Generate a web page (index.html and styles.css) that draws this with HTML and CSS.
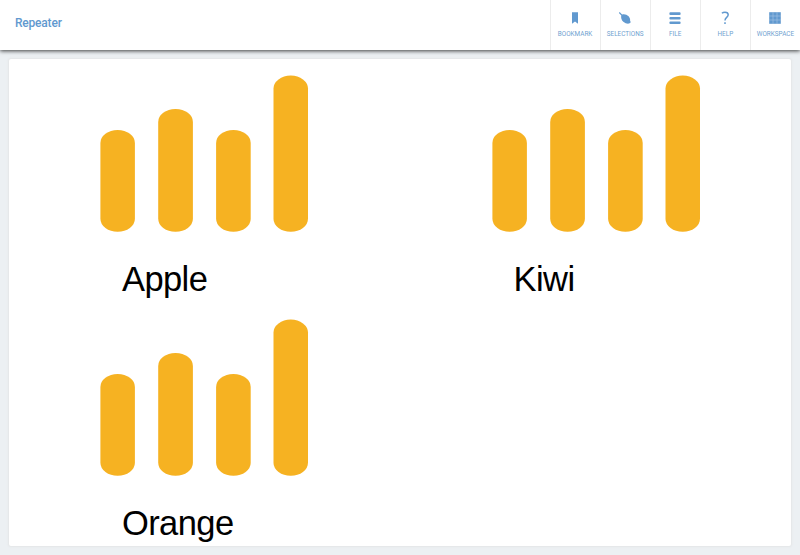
FILE: index.html
```html
<!DOCTYPE html>
<html>
<head>
  <meta charset="utf-8">
  <title>Repeater</title>
  <link rel="stylesheet" href="styles.css">
</head>
<body>
  <header class="topbar">
    <h1 class="title">Repeater</h1>
    <nav class="menu">
      <a class="menu-item">
        <svg class="icon" viewBox="0 0 14 14"><path d="M4 1.200h6v11.600L7 10.400l-3 2.400z"/></svg>
        <span>BOOKMARK</span>
      </a>
      <a class="menu-item">
        <svg class="icon" viewBox="0 0 14 14"><path d="M1.700.9l2.400 2.500C6.300 2.700 8.800 3.400 10.600 5.300c1.300 1.500 1.700 3.200 1.500 4.500l.7 1.500-1.600 1.300c-1.700.4-4-.1-5.900-1.800C3.500 9 2.700 6.300 3.300 4.400L.9 1.900z"/></svg>
        <span>SELECTIONS</span>
      </a>
      <a class="menu-item">
        <svg class="icon" viewBox="0 0 14 14"><rect x="1.400" y="1.300" width="11.200" height="2.600" rx="1"/><rect x="1.400" y="5.900" width="11.200" height="2.600" rx="1"/><rect x="1.400" y="10.500" width="11.200" height="2.600" rx="1"/></svg>
        <span>FILE</span>
      </a>
      <a class="menu-item">
        <svg class="icon icon-line" viewBox="0 0 14 14"><path d="M3.900 2.200C4.700 1.500 5.900 1.200 7 1.200c1.800 0 3.200.9 3.200 2.600C10.200 6.400 7 6.400 7 9.400M7 11.200v1.900"/></svg>
        <span>HELP</span>
      </a>
      <a class="menu-item">
        <svg class="icon" viewBox="0 0 14 14"><path d="M1.200 1.200h11.600v11.600H1.200z"/><path class="grid-lines" d="M5 1.200v11.600M9 1.200v11.600M1.200 5h11.600M1.200 9h11.600"/></svg>
        <span>WORKSPACE</span>
      </a>
    </nav>
  </header>

  <main class="panel">
    <div class="cell">
      <svg class="bars" viewBox="0 0 210 158">
        <g id="bars">
          <rect x="0.400" y="55" width="34.500" height="101.800" rx="17.200" ry="13"/>
          <rect x="58.200" y="34" width="34.700" height="122.800" rx="17.200" ry="13"/>
          <rect x="116.100" y="55" width="34.600" height="101.800" rx="17.200" ry="13"/>
          <rect x="173.500" y="0.600" width="34.500" height="156.200" rx="17.200" ry="13"/>
        </g>
      </svg>
      <div class="label">Apple</div>
    </div>
    <div class="cell">
      <svg class="bars" viewBox="0 0 210 158"><use href="#bars"/></svg>
      <div class="label">Kiwi</div>
    </div>
    <div class="cell">
      <svg class="bars" viewBox="0 0 210 158"><use href="#bars"/></svg>
      <div class="label">Orange</div>
    </div>
  </main>
</body>
</html>
```
FILE: styles.css
```css
body {
  margin: 0;
  height: 555px;
  overflow: hidden;
  background-color: #ecf0f3;
  font-family: Roboto, sans-serif;
}

/* Header */
.topbar {
  position: relative;
  display: flex;
  justify-content: space-between;
  height: 50px;
  background-color: #fff;
  box-shadow: 0 1px 4px rgba(0, 0, 0, 0.75);
}

.title {
  margin: 0 0 0 15px;
  line-height: 46px;
  font-size: 12px;
  font-weight: 500;
  letter-spacing: -0.2px;
  color: #6199cf;
}

.menu {
  display: flex;
}

.menu-item {
  display: flex;
  flex-direction: column;
  align-items: center;
  box-sizing: border-box;
  width: 50.1px;
  padding-top: 11px;
  border-left: 1px solid #ececec;
  color: #6f9fd0;
  font-size: 6.4px;
  line-height: 8px;
}

.icon {
  width: 14px;
  height: 14px;
  margin-bottom: 5px;
  fill: #6199cf;
}

.icon-line {
  fill: none;
  stroke: #6199cf;
  stroke-width: 1.5;
}

.grid-lines {
  stroke: #a9c8e6;
  stroke-width: 0.6;
}

/* Repeated charts */
.panel {
  display: grid;
  grid-template-columns: 391.6px 1fr;
  grid-template-rows: 244.4px 1fr;
  box-sizing: border-box;
  height: 487px;
  margin: 9px 9px 0;
  background-color: #fff;
  border-radius: 2px;
  box-shadow: 0 0 2px 1px #e4e6e7;
}

.cell {
  padding: 16px 0 0 91px;
}

.bars {
  display: block;
  width: 210px;
  height: 158px;
  fill: #f6b222;
}

.label {
  margin: 26px 0 0 22px;
  font-family: "Liberation Sans", Arial, sans-serif;
  font-size: 34.5px;
  letter-spacing: -0.6px;
  line-height: 40px;
  color: #000;
}
```
